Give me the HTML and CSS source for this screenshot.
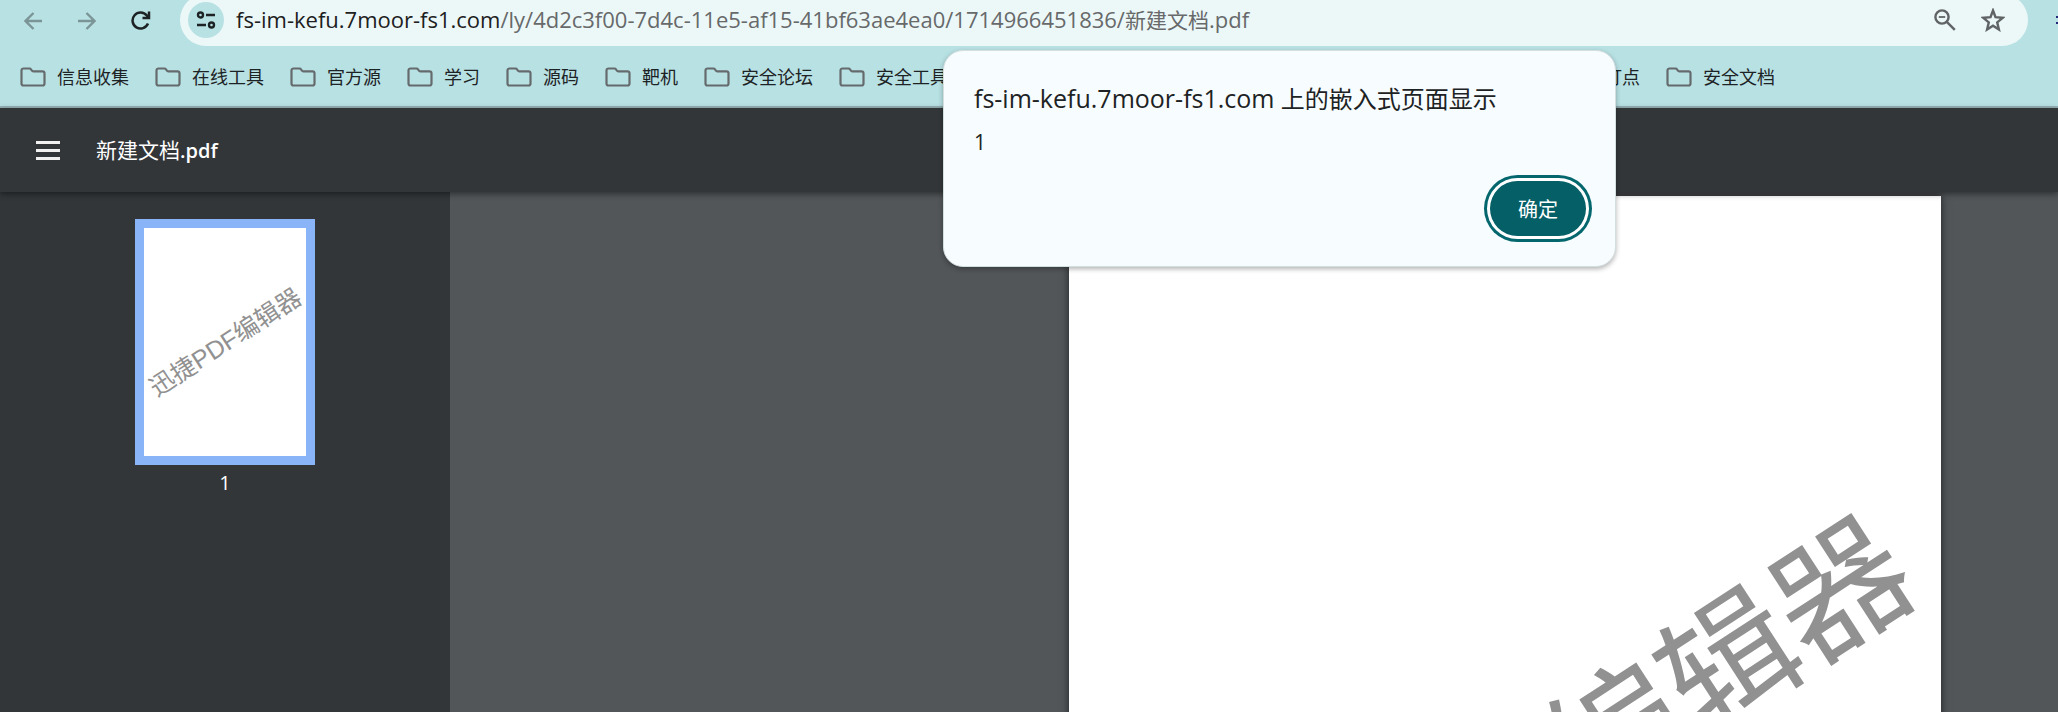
FILE: index.html
```html
<!DOCTYPE html>
<html lang="zh-CN">
<head>
<meta charset="utf-8">
<title>新建文档.pdf</title>
<link rel="stylesheet" href="styles.css">
</head>
<body>
<svg class="defs" width="0" height="0" aria-hidden="true">
  <symbol id="folder" viewBox="0 0 26 20">
    <path d="M3.500 1.500H9.500q1 0 1.500.8l.8 1.200q.5.800 1.500.800H22.500a2 2 0 0 1 2 2V16.500a2 2 0 0 1-2 2H3.500a2 2 0 0 1-2-2V3.500a2 2 0 0 1 2-2z" fill="none" stroke="currentColor" stroke-width="2.200"/>
  </symbol>
</svg>
<header class="browser">
  <div class="navbar">
    <nav class="nav-buttons" aria-label="导航">
      <button class="icon-button muted" aria-label="后退"><svg width="18" height="18" viewBox="0 0 18 18"><path d="M18 9H1.500M9.500 1 1.500 9l8 8" fill="none" stroke="currentColor" stroke-width="2.400"/></svg></button>
      <button class="icon-button muted" aria-label="前进"><svg width="18" height="18" viewBox="0 0 18 18"><path d="M0 9h16.500M8.500 1l8 8-8 8" fill="none" stroke="currentColor" stroke-width="2.400"/></svg></button>
      <button class="icon-button" aria-label="重新加载"><svg width="20" height="20" viewBox="0 0 20 20"><path d="M17 12.500A8 8 0 1 1 15.800 4.500L17.500 6.500M18 .5V7H11.500" fill="none" stroke="currentColor" stroke-width="2.500"/></svg></button>
    </nav>
    <div class="omnibox">
      <button class="site-info" aria-label="查看网站信息"><svg width="20" height="18" viewBox="0 0 20 18"><g fill="none" stroke="currentColor" stroke-width="2.400"><circle cx="4.500" cy="4" r="2.500"/><path d="M10 4h9M1 14h9"/><circle cx="15.500" cy="14" r="2.500"/></g></svg></button>
      <a class="url" href="#"><span class="host">fs-im-kefu.7moor-fs1.com</span><span>/ly/4d2c3f00-7d4c-11e5-af15-41bf63ae4ea0/1714966451836/</span><span class="cjk">新建文档</span><span>.pdf</span></a>
      <button class="omni-action" aria-label="缩放"><svg width="22" height="22" viewBox="0 0 22 22"><g fill="none" stroke="currentColor" stroke-width="2.400"><circle cx="8" cy="8" r="6.600"/><path d="m12.800 12.800 8 8"/><path d="M4.800 8h6.400" stroke-width="1.800"/></g></svg></button>
      <button class="omni-action" aria-label="收藏"><svg width="24" height="24" viewBox="0 0 24 24"><path d="m12 2.500 2.500 6.700 7.200.6-5.500 4.600 1.700 7.100-5.900-3.800-5.900 3.800 1.700-7.100-5.500-4.600 7.200-.6z" fill="none" stroke="currentColor" stroke-width="2.400"/></svg></button>
    </div>
    <span class="extension-edge"></span>
  </div>
  <nav class="bookmarks" aria-label="书签">
    <a href="#"><svg><use href="#folder"/></svg>信息收集</a>
    <a href="#"><svg><use href="#folder"/></svg>在线工具</a>
    <a href="#"><svg><use href="#folder"/></svg>官方源</a>
    <a href="#"><svg><use href="#folder"/></svg>学习</a>
    <a href="#"><svg><use href="#folder"/></svg>源码</a>
    <a href="#"><svg><use href="#folder"/></svg>靶机</a>
    <a href="#"><svg><use href="#folder"/></svg>安全论坛</a>
    <a href="#"><svg><use href="#folder"/></svg>安全工具</a>
    <a class="after-gap" href="#"><svg><use href="#folder"/></svg>打点</a>
    <a href="#"><svg><use href="#folder"/></svg>安全文档</a>
  </nav>
</header>
<div class="toolbar">
  <button class="menu" aria-label="菜单"><span></span><span></span><span></span></button>
  <h1 class="title">新建文档<span class="latin">.pdf</span></h1>
</div>
<main class="viewer">
  <aside class="sidebar">
    <button class="thumb" aria-label="第 1 页"><span class="watermark small">迅捷PDF编辑器</span></button>
    <span class="page-number">1</span>
  </aside>
  <section class="canvas">
    <div class="page"><span class="watermark large">迅捷PDF编辑器</span></div>
  </section>
</main>
<div class="dialog" role="alertdialog" aria-labelledby="dialog-title">
  <h2 class="dialog-title" id="dialog-title"><span class="latin">fs-im-kefu.7moor-fs1.com</span> 上的嵌入式页面显示</h2>
  <p class="dialog-text">1</p>
  <button class="confirm">确定</button>
</div>
</body>
</html>
```
FILE: styles.css
```css
* { box-sizing: border-box; }
body {
  margin: 0;
  height: 100vh;
  overflow: hidden;
  display: flex;
  flex-direction: column;
  position: relative;
  background: #525659;
  color: #1d2324;
  font-family: "Open Sans", "Noto Sans CJK SC", sans-serif;
}
button { padding: 0; border: 0; background: none; color: inherit; font: inherit; }
a { color: inherit; text-decoration: none; }
h1, h2, p { margin: 0; font-weight: 400; }
svg { display: block; }
.defs { position: absolute; }

.browser { background: #b8e1e4; border-bottom: 2px solid #95b3b7; }
.navbar { display: flex; align-items: center; height: 46px; overflow: hidden; }
.nav-buttons { display: flex; flex: none; width: 180px; padding: 0 12px 5px 6px; }
.icon-button { display: grid; place-items: center; width: 54px; height: 36px; }
.muted { color: #7b9495; }
.omnibox {
  display: flex;
  align-items: center;
  flex: 1;
  height: 52px;
  margin-top: -6px;
  padding: 0 23px 0 8px;
  border-radius: 26px;
  background: #ecf8f8;
}
.site-info {
  display: grid;
  place-items: center;
  width: 36px;
  height: 36px;
  margin-right: 12px;
  border-radius: 50%;
  background: #b8e1e4;
}
.url { flex: 1; padding-bottom: 2px; color: #67696a; font-size: 22px; line-height: 30px; white-space: nowrap; }
.host { color: #1d2021; }
.url .cjk { font-size: 21px; }
.omni-action { display: grid; place-items: center; width: 24px; height: 24px; margin-left: 24px; color: #606465; }
.extension-edge { flex: none; width: 2px; height: 8px; margin: -6px 0 0 28px; border: solid #24267a; border-width: 2px 0; }

.bookmarks { display: flex; gap: 26px; height: 60px; padding: 1px 21px 0 20px; white-space: nowrap; }
.bookmarks a { display: flex; align-items: center; flex: none; gap: 11px; font-size: 18px; line-height: 26px; }
.bookmarks svg { width: 26px; height: 20px; color: #656b6d; }
.after-gap { margin-left: 593px; }

.toolbar {
  position: relative;
  display: flex;
  align-items: center;
  flex: none;
  gap: 36px;
  height: 84px;
  padding: 0 36px;
  background: #323639;
  color: #fff;
  box-shadow: 0 2px 6px rgba(0, 0, 0, .45);
}
.menu { display: flex; flex-direction: column; gap: 5px; width: 24px; }
.menu span { height: 3px; background: #f1f1f1; }
.title { font-size: 21px; line-height: 30px; font-weight: 400; }
.title .latin { font-size: 20px; font-weight: 600; }

.viewer { display: flex; flex: 1; min-height: 0; }
.sidebar {
  display: flex;
  flex-direction: column;
  align-items: center;
  flex: none;
  width: 450px;
  padding-top: 27px;
  background: #323639;
  color: #fff;
}
.thumb {
  display: flex;
  align-items: center;
  justify-content: center;
  width: 180px;
  height: 246px;
  border: 9px solid #8ab4f8;
  background: #fff;
  overflow: hidden;
}
.page-number { margin-top: 5px; font-size: 20px; line-height: 26px; }
.canvas { display: flex; justify-content: flex-end; flex: 1; padding: 4px 117px 0 0; overflow: hidden; }
.page {
  display: flex;
  align-items: center;
  justify-content: center;
  flex: none;
  width: 872px;
  height: 1228px;
  background: #fff;
  box-shadow: 0 0 8px rgba(0, 0, 0, .6);
}
.watermark {
  flex: none;
  color: #919191;
  font-family: "Liberation Sans", "Noto Sans CJK SC", sans-serif;
  line-height: 1;
  white-space: nowrap;
  transform: rotate(-33deg);
}
.small { font-size: 25px; }
.large { font-size: 134px; }

.dialog {
  position: absolute;
  top: 50px;
  left: 943px;
  display: flex;
  flex-direction: column;
  width: 673px;
  padding: 30px 29px 27px 30px;
  border: 1px solid #d3dedf;
  border-radius: 20px;
  background: #f7fcfe;
  box-shadow: 0 2px 5px rgba(0, 0, 0, .3);
}
.dialog-title { font-size: 24px; line-height: 34px; }
.dialog-title .latin { font-size: 25px; }
.dialog-text { margin-top: 12px; font-size: 21px; line-height: 28px; }
.confirm {
  align-self: flex-end;
  width: 96px;
  height: 55px;
  margin: 25px 0 3px;
  border-radius: 28px;
  background: #045f66;
  color: #fff;
  font-size: 20px;
  box-shadow: 0 0 0 3px #fff, 0 0 0 6px #04676e;
}
```
